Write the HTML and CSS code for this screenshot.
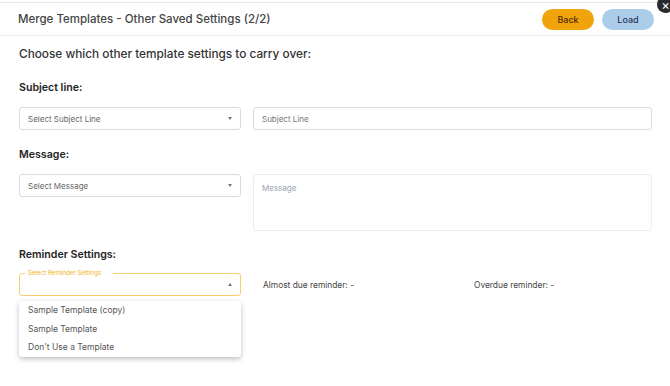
FILE: index.html
```html
<!DOCTYPE html>
<html lang="en">
<head>
    <meta charset="UTF-8">
    <meta name="viewport" content="width=device-width, initial-scale=1.0">
    <title>Merge Templates</title>
    <link rel="stylesheet" href="styles.css">
</head>
<body>
    <div class="modal">
        <div class="modal-header">
            <h2>Merge Templates - Other Saved Settings (2/2)</h2>
            <div class="actions">
                <button class="btn btn-back">Back</button>
                <button class="btn btn-load">Load</button>
            </div>
            <span class="close">&times;</span>
        </div>
        <div class="modal-body">
            <p class="intro">Choose which other template settings to carry over:</p>

            <h3>Subject line:</h3>
            <div class="row">
                <div class="select">
                    <span>Select Subject Line</span>
                    <span class="caret down"></span>
                </div>
                <div class="input">Subject Line</div>
            </div>

            <h3>Message:</h3>
            <div class="row">
                <div class="select">
                    <span>Select Message</span>
                    <span class="caret down"></span>
                </div>
                <div class="input textarea">Message</div>
            </div>

            <h3 class="reminder-title">Reminder Settings:</h3>
            <div class="row">
                <div class="select-wrap">
                    <div class="select open">
                        <span class="legend">Select Reminder Settings</span>
                        <span></span>
                        <span class="caret up"></span>
                    </div>
                    <ul class="menu">
                        <li>Sample Template (copy)</li>
                        <li>Sample Template</li>
                        <li>Don't Use a Template</li>
                    </ul>
                </div>
                <div class="reminder-info">
                    <span>Almost due reminder: -</span>
                    <span>Overdue reminder: -</span>
                </div>
            </div>
        </div>
    </div>
</body>
</html>
```

FILE: styles.css
```css
body {
    margin: 0;
    font-family: Inter, "Noto Sans", Arial, sans-serif;
    background-color: #ffffff;
    color: #333;
}
.modal {
    position: relative;
    margin-top: 2px;
    min-height: 383px;
    border-top: 1px solid #e6e6e6;
}
.modal-header {
    display: flex;
    align-items: center;
    justify-content: space-between;
    height: 32px;
    padding: 0 16px 0 18px;
    border-bottom: 1px solid #ebebeb;
}
.modal-header h2 {
    margin: 0;
    font-size: 11.5px;
    font-weight: 500;
    color: #444;
}
.actions {
    display: flex;
    gap: 8px;
}
.btn {
    width: 52px;
    height: 21px;
    border: none;
    border-radius: 11px;
    font-family: inherit;
    font-size: 9px;
    font-weight: 500;
    cursor: pointer;
}
.btn-back {
    background-color: #f0a30a;
    color: #4a2a05;
}
.btn-load {
    background-color: #abcdea;
    color: #1f3558;
}
.close {
    position: absolute;
    top: -7px;
    right: -4px;
    width: 17px;
    height: 17px;
    border-radius: 50%;
    background-color: #2a2a2e;
    color: #fff;
    font-size: 13px;
    line-height: 19px;
    text-align: center;
}
.modal-body {
    padding: 0 18px 0 19px;
}
.intro {
    margin: 9px 0 0;
    font-size: 11.8px;
    line-height: 18px;
    font-weight: 500;
    color: #333;
}
h3 {
    margin: 18px 0 12px;
    font-size: 10.6px;
    line-height: 14px;
    font-weight: 600;
    color: #222;
}
.reminder-title {
    margin: 17px 0 11px;
}
.row {
    display: flex;
    gap: 12px;
    align-items: flex-start;
}
.select {
    box-sizing: border-box;
    width: 222px;
    height: 23px;
    display: flex;
    align-items: center;
    justify-content: space-between;
    padding: 0 8px;
    border: 1px solid #d6dbe1;
    border-radius: 3px;
    font-size: 8px;
    color: #666;
}
.caret {
    width: 0;
    height: 0;
    border-left: 2.5px solid transparent;
    border-right: 2.5px solid transparent;
}
.caret.down {
    border-top: 3px solid #777;
}
.caret.up {
    border-bottom: 3px solid #777;
}
.input {
    box-sizing: border-box;
    flex: 1;
    height: 23px;
    padding: 0 8px;
    display: flex;
    align-items: center;
    border: 1px solid #d6dbe1;
    border-radius: 3px;
    font-size: 8px;
    color: #777;
}
.textarea {
    height: 57px;
    align-items: flex-start;
    padding-top: 8px;
    border-color: #eceef1;
    color: #9aa3b0;
}
.select-wrap {
    position: relative;
    width: 222px;
}
.select.open {
    position: relative;
    border-color: #f6cf6f;
}
.legend {
    position: absolute;
    top: -5px;
    left: 5px;
    padding: 0 12px 0 3px;
    background-color: #fff;
    font-size: 6.2px;
    line-height: 8px;
    color: #f0b323;
}
.menu {
    position: absolute;
    top: 28px;
    left: 0;
    z-index: 2;
    width: 222px;
    margin: 0;
    padding: 0;
    list-style: none;
    background-color: #fff;
    border-radius: 3px;
    box-shadow: 0 2px 5px rgba(0,0,0,0.25);
}
.menu li {
    height: 18.5px;
    line-height: 18.5px;
    padding: 0 9px;
    font-size: 8.5px;
    color: #555;
}
.reminder-info {
    display: flex;
    flex: 1;
    height: 23px;
    align-items: center;
    padding-left: 10px;
    font-size: 8.4px;
    color: #444;
}
.reminder-info span {
    width: 211px;
}
```
